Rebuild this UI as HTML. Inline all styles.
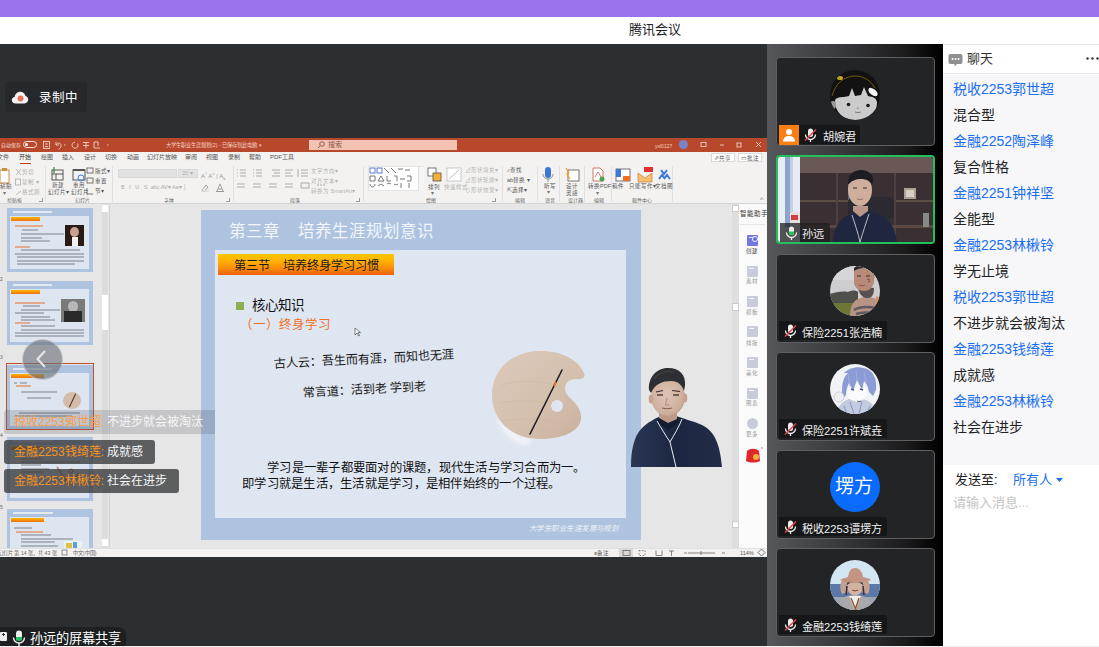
<!DOCTYPE html>
<html lang="zh-CN"><head><meta charset="utf-8">
<style>
*{box-sizing:border-box;margin:0;padding:0}
html,body{width:1099px;height:647px;overflow:hidden;background:#fff;font-family:"Liberation Sans",sans-serif}
.a{position:absolute}
#top{left:0;top:0;width:1099px;height:17px;background:#9a72ec}
#title{left:0;top:17px;width:1099px;height:27px;background:#fff}
#title span{position:absolute;left:629px;top:2px;font-size:13px;color:#222;letter-spacing:0}
#main{left:0;top:44px;width:767px;height:602px;background:#2c2f32}
#strip{left:767px;top:44px;width:176px;height:602px;background:linear-gradient(90deg,#55575b 0%,#3a3b3e 40%,#1a1a1b 80%,#050505 95%,#000 100%)}
#chat{left:943px;top:44px;width:156px;height:602px;background:#fff;border-top:1px solid #e4e4e6}
#bottomline{left:0;top:646px;width:1099px;height:1px;background:#f0f0f0}
.t13{font-size:13px;line-height:16px;white-space:nowrap}
.msgs div{font-size:14px;line-height:26px;color:#222;white-space:nowrap}
.msgs .b{color:#1a6ff0}
.tiny{font-size:7px;line-height:8px;white-space:nowrap}
.tabs span{position:absolute;top:0;font-size:6px;line-height:9px;color:#555;white-space:nowrap}
.tile{width:159px;height:89px;background:#232426;border-radius:4px;overflow:hidden}
.lab{height:19px;background:#161718;border-radius:0 3px 0 0}
.lt{font-size:11.2px;line-height:14px;color:#f0f0f0;white-space:nowrap}
.bub{height:24px;border-radius:3px;padding-left:10px;font-size:12px;line-height:24px;white-space:nowrap}
</style></head><body>
<div class="a" id="top"></div>
<div class="a" id="title"><span>腾讯会议</span></div>
<div class="a" id="main">
<div class="a" style="left:5px;top:38px;width:82px;height:30px;background:#26282b;border-radius:4px"></div>
<svg class="a" style="left:11px;top:47px" width="18" height="13" viewBox="0 0 18 13"><path d="M4.5 12.5C2.3 12.5 .8 11 .8 9.2c0-1.7 1.3-3 2.9-3.2C4.1 3 6.4.8 9.3.8c2.6 0 4.7 1.8 5.2 4.3 1.6.3 2.7 1.7 2.7 3.5 0 2.1-1.6 3.9-3.7 3.9z" fill="#f4f4f4"/><circle cx="9.5" cy="7.5" r="3" fill="#e5735c"/></svg>
<div class="a t13" style="left:39px;top:46px;color:#fff;font-size:12.5px">录制中</div>
<div class="a" style="left:0;top:583px;width:126px;height:19px;background:#1d1f21;border-radius:0 8px 0 0"></div>
<div class="a" style="left:0;top:588px;width:7px;height:9px;background:#eee;border-radius:1px"></div><div class="a" style="left:2px;top:590px;width:3px;height:1px;background:#333"></div><div class="a" style="left:3px;top:589px;width:1px;height:3px;background:#333"></div>
<svg class="a" style="left:12px;top:586px" width="14" height="16" viewBox="0 0 14 16"><rect x="4" y="0.5" width="6" height="10" rx="3" fill="#eee"/><rect x="4" y="7" width="6" height="3.5" fill="#22c55e"/><path d="M1.5 7.5a5.5 5.5 0 0 0 11 0" stroke="#eee" stroke-width="1.4" fill="none"/><path d="M7 13v3" stroke="#eee" stroke-width="1.4"/></svg>
<div class="a t13" style="left:30px;top:587px;color:#fff;font-size:13.2px">孙远的屏幕共享</div>
</div>
<div class="a" id="ppt" style="left:0;top:138px;width:767px;height:419px;background:#e6e6e6;overflow:hidden">
<!-- title bar -->
<div class="a" style="left:0;top:0;width:767px;height:14px;background:#b8482b"></div>
<div class="a tiny" style="left:1px;top:4px;color:#fbe3dc;font-size:4.8px">自动保存</div>
<div class="a" style="left:23px;top:3px;width:14px;height:7px;border:1px solid #fbe3dc;border-radius:4px"></div>
<div class="a" style="left:25px;top:5px;width:3px;height:3px;background:#fff;border-radius:2px"></div>
<svg class="a" style="left:42px;top:2px" width="70" height="10"><g stroke="#f3cfc4" fill="none" stroke-width="0.9"><rect x="1.5" y="1.5" width="6" height="7"/><path d="M3 4h3M3 6.5h3"/><path d="M14 2v3h3"/><path d="M14 5c1.5-2.5 5-2.5 5 0.5 0 2-1 3-2.5 4"/><path d="M22 5h1.5"/><path d="M33 2.2a3 3 0 1 0 2.5 1.3"/><path d="M41 2.5h6M44 2.5v6M41 5.5h6"/><path d="M52 2h4v4M52 2v6h6"/><path d="M65 5h1.5"/></g></svg>
<div class="a tiny" style="left:166px;top:3px;color:#f4cfc3;font-size:5.3px">大学生职业生涯规划(2) - 已保存到此电脑 ▾</div>
<div class="a" style="left:309px;top:2px;width:148px;height:10px;background:#f2c3b3"></div>
<svg class="a" style="left:317px;top:3px" width="8" height="8"><circle cx="5" cy="3" r="2.3" stroke="#7a4a3a" fill="none" stroke-width="0.8"/><path d="M3.3 4.7L1 7" stroke="#7a4a3a" stroke-width="0.8"/></svg>
<div class="a tiny" style="left:328px;top:3px;color:#8a5a4a">搜索</div>
<div class="a tiny" style="left:655px;top:4px;color:#f4cfc3;font-size:5px">yxl0127</div>
<div class="a" style="left:679px;top:2px;width:9px;height:9px;background:#7a83c7;border-radius:50%"></div>
<svg class="a" style="left:696px;top:2px" width="70" height="10"><g stroke="#f4d0c5" fill="none" stroke-width="0.9"><rect x="5" y="2.5" width="5" height="4"/><path d="M24 5h4"/><rect x="41" y="3" width="4" height="4"/><path d="M60 2l5 5M65 2l-5 5"/></g></svg>
<!-- tabs -->
<div class="a" style="left:0;top:14px;width:767px;height:51px;background:#f3f2f1"></div>
<div class="a tabs" style="left:0;top:15px">
<span style="left:-3px">文件</span><span style="left:19px;color:#333">开始</span><span style="left:41px">绘图</span><span style="left:62px">插入</span><span style="left:84px">设计</span><span style="left:105px">切换</span><span style="left:127px">动画</span><span style="left:147px">幻灯片放映</span><span style="left:185px">审阅</span><span style="left:206px">视图</span><span style="left:228px">录制</span><span style="left:249px">帮助</span><span style="left:270px">PDF工具</span>
</div>
<div class="a" style="left:20px;top:25px;width:11px;height:1px;background:#c43e1c"></div>
<div class="a" style="left:711px;top:15px;width:24px;height:9px;border:1px solid #d8d8d8;background:#fff"></div>
<div class="a tiny" style="left:714px;top:16px;color:#555;font-size:5.5px">⇗共享</div>
<div class="a" style="left:738px;top:15px;width:24px;height:9px;border:1px solid #d8d8d8;background:#fff"></div>
<div class="a tiny" style="left:741px;top:16px;color:#555;font-size:5.5px">▭批注</div>
<!-- ribbon -->
<div id="ribbon">
<div class="a" style="left:7px;top:59px;font-size:5px;line-height:7px;color:#666;white-space:nowrap">剪贴板</div>
<div class="a" style="left:75px;top:59px;font-size:5px;line-height:7px;color:#666;white-space:nowrap">幻灯片</div>
<div class="a" style="left:164px;top:59px;font-size:5px;line-height:7px;color:#666;white-space:nowrap">字体</div>
<div class="a" style="left:290px;top:59px;font-size:5px;line-height:7px;color:#666;white-space:nowrap">段落</div>
<div class="a" style="left:426px;top:59px;font-size:5px;line-height:7px;color:#666;white-space:nowrap">绘图</div>
<div class="a" style="left:515px;top:59px;font-size:5px;line-height:7px;color:#666;white-space:nowrap">编辑</div>
<div class="a" style="left:545px;top:59px;font-size:5px;line-height:7px;color:#666;white-space:nowrap">语音</div>
<div class="a" style="left:568px;top:59px;font-size:5px;line-height:7px;color:#666;white-space:nowrap">设计器</div>
<div class="a" style="left:594px;top:59px;font-size:5px;line-height:7px;color:#666;white-space:nowrap">编辑</div>
<div class="a" style="left:632px;top:59px;font-size:5px;line-height:7px;color:#666;white-space:nowrap">稿件中心</div>
<div class="a" style="left:45px;top:28px;width:1px;height:36px;background:#e0e0e0"></div>
<div class="a" style="left:112px;top:28px;width:1px;height:36px;background:#e0e0e0"></div>
<div class="a" style="left:233px;top:28px;width:1px;height:36px;background:#e0e0e0"></div>
<div class="a" style="left:363px;top:28px;width:1px;height:36px;background:#e0e0e0"></div>
<div class="a" style="left:502px;top:28px;width:1px;height:36px;background:#e0e0e0"></div>
<div class="a" style="left:537px;top:28px;width:1px;height:36px;background:#e0e0e0"></div>
<div class="a" style="left:559px;top:28px;width:1px;height:36px;background:#e0e0e0"></div>
<div class="a" style="left:584px;top:28px;width:1px;height:36px;background:#e0e0e0"></div>
<div class="a" style="left:611px;top:28px;width:1px;height:36px;background:#e0e0e0"></div>
<div class="a" style="left:672px;top:28px;width:1px;height:36px;background:#e0e0e0"></div>
<div class="a" style="left:39px;top:60px;width:4px;height:4px;border-right:1px solid #999;border-bottom:1px solid #999"></div>
<div class="a" style="left:226px;top:60px;width:4px;height:4px;border-right:1px solid #999;border-bottom:1px solid #999"></div>
<div class="a" style="left:356px;top:60px;width:4px;height:4px;border-right:1px solid #999;border-bottom:1px solid #999"></div>
<div class="a" style="left:492px;top:60px;width:4px;height:4px;border-right:1px solid #999;border-bottom:1px solid #999"></div>
<svg class="a" style="left:0;top:29px" width="12" height="20"><rect x="0" y="3" width="9" height="13" fill="#fff" stroke="#c89040" stroke-width="1"/><rect x="2" y="1" width="5" height="3" fill="#c89040"/></svg>
<div class="a" style="left:0px;top:45px;font-size:5.5px;line-height:7px;color:#555;white-space:nowrap">粘贴</div>
<div class="a" style="left:3px;top:52px;font-size:5.5px;line-height:7px;color:#777;white-space:nowrap">▾</div>
<svg class="a" style="left:14px;top:30px" width="10" height="30"><g stroke="#aaa" fill="none" stroke-width="0.8"><path d="M2 1l5 6M7 1L2 7"/><rect x="1.5" y="11" width="5" height="6"/><path d="M2 27l5-4"/></g></svg>
<div class="a" style="left:22px;top:31px;font-size:5.5px;line-height:7px;color:#b0b0b0;white-space:nowrap">剪切</div>
<div class="a" style="left:22px;top:41px;font-size:5.5px;line-height:7px;color:#b0b0b0;white-space:nowrap">复制 ▾</div>
<div class="a" style="left:22px;top:51px;font-size:5.5px;line-height:7px;color:#b0b0b0;white-space:nowrap">格式刷</div>
<svg class="a" style="left:50px;top:28px" width="40" height="16"><g stroke="#555" fill="none" stroke-width="1"><rect x="2" y="4" width="11" height="10"/><path d="M2 8h11M6 8v6"/><rect x="23" y="4" width="12" height="10"/><path d="M23 4h12" stroke-width="2"/></g><path d="M4 1v6" stroke="#2a8a3a" stroke-width="1.2"/><circle cx="31" cy="12" r="3" stroke="#3a7ad8" fill="none" stroke-width="1"/></svg>
<div class="a" style="left:52px;top:44px;font-size:5.5px;line-height:7px;color:#555;white-space:nowrap">新建</div>
<div class="a" style="left:48px;top:51px;font-size:5.5px;line-height:7px;color:#555;white-space:nowrap">幻灯片▾</div>
<div class="a" style="left:73px;top:44px;font-size:5.5px;line-height:7px;color:#555;white-space:nowrap">重用</div>
<div class="a" style="left:71px;top:51px;font-size:5.5px;line-height:7px;color:#555;white-space:nowrap">幻灯片</div>
<svg class="a" style="left:86px;top:29px" width="8" height="30"><g stroke="#555" fill="none" stroke-width="0.8"><rect x="1" y="1" width="6" height="5"/><rect x="1" y="11" width="6" height="5"/><path d="M1 21v6h6"/></g></svg>
<div class="a" style="left:95px;top:30px;font-size:5.5px;line-height:7px;color:#555;white-space:nowrap">版式▾</div>
<div class="a" style="left:95px;top:40px;font-size:5.5px;line-height:7px;color:#555;white-space:nowrap">重置</div>
<div class="a" style="left:95px;top:50px;font-size:5.5px;line-height:7px;color:#555;white-space:nowrap">节▾</div>
<div class="a" style="left:118px;top:31px;width:59px;height:9px;background:#e2e2e2;border:1px solid #d8d8d8"></div>
<div class="a" style="left:178px;top:31px;width:20px;height:9px;background:#e2e2e2;border:1px solid #d8d8d8"></div>
<div class="a" style="left:182px;top:32px;font-size:5.5px;line-height:7px;color:#b0b0b0;white-space:nowrap">20 ▾</div>
<div class="a" style="left:201px;top:32px;font-size:6px;line-height:7px;color:#999;white-space:nowrap">A<sup style="font-size:4px">^</sup> A<sup style="font-size:4px">˅</sup> | A<sub style="font-size:4px">b</sub></div>
<div class="a" style="left:121px;top:46px;font-size:5.5px;line-height:7px;color:#aaa;white-space:nowrap">B &nbsp; I &nbsp; U &nbsp; S &nbsp;abc AV▾ Aa▾ │</div>
<svg class="a" style="left:200px;top:45px" width="30" height="9"><g stroke="#999" fill="none" stroke-width="0.9"><path d="M2 7l4-5 2 2-4 5z"/><path d="M1 8h8" stroke="#ddd" stroke-width="1.5"/><path d="M17 8l3-7 3 7M18 6h4"/><path d="M16 8.5h8" stroke="#999" stroke-width="1"/></g></svg>
<svg class="a" style="left:236px;top:30px" width="124" height="22"><g stroke="#999" fill="none" stroke-width="0.8"><path d="M1 2h1M4 2h6M1 5h1M4 5h6M1 8h1M4 8h6"/><path d="M17 2h1M20 2h6M17 5h1M20 5h6M17 8h1M20 8h6"/><path d="M36 2h8M38 5h6M36 8h8"/><path d="M49 2h8M49 5h6M49 8h8"/><path d="M62 1v8M65 2h7M65 5h7M65 8h7"/><path d="M1 16h8M1 19h8M17 16h8M17 19h8M33 16h8M33 19h8M49 16h8M49 19h8M65 15h8v5h-8z"/><path d="M81 17h2M84 17h2M87 17h2"/></g></svg>
<div class="a" style="left:311px;top:30px;font-size:5.5px;line-height:7px;color:#b4b4b4;white-space:nowrap">文字方向▾</div>
<div class="a" style="left:311px;top:40px;font-size:5.5px;line-height:7px;color:#b4b4b4;white-space:nowrap">对齐文本▾</div>
<div class="a" style="left:311px;top:50px;font-size:5.5px;line-height:7px;color:#b4b4b4;white-space:nowrap">转换为 SmartArt▾</div>
<div class="a" style="left:368px;top:28px;width:56px;height:25px;background:#fff;border:1px solid #e4e4e4"></div>
<svg class="a" style="left:369px;top:29px" width="54" height="22"><g stroke="#555" fill="none" stroke-width="0.8"><rect x="1" y="1" width="5" height="5" stroke="#3060c0"/><rect x="8" y="1" width="5" height="5" stroke="#3060c0"/><path d="M15 1l5 5M22 1l5 5M29 2h5M36 3h5"/><path d="M1 9h5v5h-5zM9 14l3-5 3 5zM18 9v5h4M25 9h3v5M31 12h5M38 9h4v5h-4"/><path d="M1 17c0 4 5 4 5 0M9 19l3-2 3 2M18 17q2-2 4 0M25 17q2 2 4 0M32 16v5M40 16v5"/></g></svg>
<div class="a" style="left:418px;top:29px;width:6px;height:24px;background:#f5f5f5;border-left:1px solid #ddd"></div>
<svg class="a" style="left:427px;top:29px" width="16" height="16"><rect x="1" y="1" width="8" height="8" fill="#fff" stroke="#555" stroke-width="0.8"/><rect x="6" y="6" width="8" height="8" fill="#f5b030" stroke="#555" stroke-width="0.8"/></svg>
<div class="a" style="left:428px;top:46px;font-size:5.5px;line-height:7px;color:#555;white-space:nowrap">排列</div>
<div class="a" style="left:431px;top:52px;font-size:5.5px;line-height:7px;color:#777;white-space:nowrap">▾</div>
<svg class="a" style="left:446px;top:29px" width="18" height="16"><rect x="1" y="1" width="14" height="13" fill="#fff" stroke="#bbb" stroke-width="0.8"/><path d="M3 12l10-9" stroke="#bbb"/></svg>
<div class="a" style="left:444px;top:46px;font-size:5.5px;line-height:7px;color:#b4b4b4;white-space:nowrap">快速样式</div>
<div class="a" style="left:465px;top:29px;font-size:5.5px;line-height:7px;color:#b4b4b4;white-space:nowrap">⊿形状填充▾</div>
<div class="a" style="left:465px;top:39px;font-size:5.5px;line-height:7px;color:#b4b4b4;white-space:nowrap">⊿形状轮廓▾</div>
<div class="a" style="left:465px;top:49px;font-size:5.5px;line-height:7px;color:#b4b4b4;white-space:nowrap">⊙形状效果▾</div>
<div class="a" style="left:507px;top:29px;font-size:5.5px;line-height:7px;color:#555;white-space:nowrap">⌕查找</div>
<div class="a" style="left:507px;top:39px;font-size:5.5px;line-height:7px;color:#555;white-space:nowrap">ab替换 ▾</div>
<div class="a" style="left:507px;top:49px;font-size:5.5px;line-height:7px;color:#555;white-space:nowrap">⇱选择▾</div>
<svg class="a" style="left:542px;top:28px" width="12" height="18"><rect x="3" y="1" width="6" height="11" rx="3" fill="#3a78d8"/><path d="M1 8a5 5 0 0 0 10 0M6 13v3" stroke="#777" stroke-width="0.8" fill="none"/></svg>
<div class="a" style="left:544px;top:45px;font-size:5.5px;line-height:7px;color:#555;white-space:nowrap">听写</div>
<div class="a" style="left:547px;top:51px;font-size:5.5px;line-height:7px;color:#777;white-space:nowrap">▾</div>
<svg class="a" style="left:564px;top:29px" width="16" height="15"><rect x="4" y="3" width="11" height="11" fill="#fff" stroke="#555" stroke-width="0.8"/><path d="M2 1l3 5-2 1 3 5" stroke="#f5a020" stroke-width="1.2" fill="none"/></svg>
<div class="a" style="left:566px;top:45px;font-size:5.5px;line-height:7px;color:#555;white-space:nowrap">设计</div>
<div class="a" style="left:566px;top:52px;font-size:5.5px;line-height:7px;color:#555;white-space:nowrap">灵感</div>
<svg class="a" style="left:590px;top:29px" width="16" height="15"><path d="M3 1h7l3 3v10H3z" fill="#fff" stroke="#d05040" stroke-width="0.8"/><path d="M5 10l3-5 3 5" stroke="#d05040" stroke-width="0.8" fill="none"/><circle cx="12" cy="12" r="2.5" fill="#50a050"/></svg>
<div class="a" style="left:588px;top:45px;font-size:5.5px;line-height:7px;color:#555;white-space:nowrap">转换PDF</div>
<div class="a" style="left:596px;top:52px;font-size:5.5px;line-height:7px;color:#777;white-space:nowrap">▾</div>
<svg class="a" style="left:614px;top:28px" width="60" height="18"><rect x="2" y="3" width="14" height="12" fill="#fff" stroke="#555" stroke-width="0.8"/><rect x="2" y="3" width="5" height="8" fill="#3a7ad8"/><rect x="9" y="10" width="7" height="5" fill="#f07020"/><path d="M24 7l7 5 7-5v9H24z" fill="#f5c070" stroke="#c07030" stroke-width="0.6"/><rect x="30" y="1" width="9" height="5" fill="#e03030"/><path d="M47 4l3 4 3-4M45 13l3-4 3 4M50 13l3-4 3 4" stroke="#3a7ad8" stroke-width="2" fill="none"/></svg>
<div class="a" style="left:612px;top:45px;font-size:5.5px;line-height:7px;color:#555;white-space:nowrap">稿件</div>
<div class="a" style="left:629px;top:45px;font-size:5.5px;line-height:7px;color:#555;white-space:nowrap">只能写作▾</div>
<div class="a" style="left:655px;top:45px;font-size:5.5px;line-height:7px;color:#555;white-space:nowrap">文档图</div>
<div class="a" style="left:760px;top:58px;font-size:7px;line-height:7px;color:#777;white-space:nowrap">^</div>
</div>
<div class="a" style="left:0;top:65px;width:767px;height:1px;background:#d5d5d5"></div>
<!-- thumbnails pane -->
<div class="a" style="left:0;top:66px;width:109px;height:344px;background:#e6e6e6"></div>
<div class="a" style="left:109px;top:66px;width:1px;height:344px;background:#d4d4d4"></div>
<div class="a" style="left:102px;top:66px;width:6px;height:344px;background:#dcdcdc"></div>
<div class="a" style="left:102px;top:67px;width:6px;height:7px;background:#fff"></div>
<div class="a" style="left:102px;top:157px;width:6px;height:35px;background:#fff"></div>
<div class="a" style="left:102px;top:401px;width:6px;height:7px;background:#fff"></div>
<div class="a" style="left:7px;top:70px;width:86px;height:64px;background:#adc3e0;overflow:hidden"><div class="a" style="left:6px;top:3px;width:39px;height:2px;background:#f4f7fb;opacity:.75"></div><div class="a" style="left:3px;top:8px;width:79px;height:53px;background:#dde5f0"></div><div class="a" style="left:3.5px;top:9px;width:29px;height:4px;background:linear-gradient(#ffb800,#f07010)"></div><div class="a" style="left:58px;top:17px;width:19px;height:21px;background:#2a1a14"></div><div class="a" style="left:63px;top:19px;width:9px;height:10px;border-radius:50%;background:#c8a090"></div><div class="a" style="left:65px;top:29px;width:6px;height:9px;background:#f0f0f0"></div><div class="a" style="left:8px;top:17px;width:28px;height:2px;background:#e8844a;opacity:.6"></div><div class="a" style="left:15px;top:21px;width:16px;height:2px;background:#6a6e78;opacity:.42"></div><div class="a" style="left:14px;top:25px;width:43px;height:2px;background:#6a6e78;opacity:.42"></div><div class="a" style="left:14px;top:28.5px;width:21px;height:2px;background:#6a6e78;opacity:.42"></div><div class="a" style="left:14px;top:32px;width:29px;height:2px;background:#6a6e78;opacity:.42"></div><div class="a" style="left:8px;top:38px;width:15px;height:2px;background:#e8844a;opacity:.6"></div><div class="a" style="left:14px;top:41px;width:59px;height:2px;background:#6a6e78;opacity:.42"></div><div class="a" style="left:8px;top:44.5px;width:69px;height:2px;background:#6a6e78;opacity:.42"></div><div class="a" style="left:10px;top:48px;width:67px;height:2px;background:#6a6e78;opacity:.42"></div><div class="a" style="left:10px;top:51.5px;width:67px;height:2px;background:#6a6e78;opacity:.42"></div><div class="a" style="left:10px;top:55px;width:58px;height:2px;background:#6a6e78;opacity:.42"></div></div><div class="a" style="left:7px;top:143px;width:86px;height:64px;background:#adc3e0;overflow:hidden"><div class="a" style="left:6px;top:3px;width:39px;height:2px;background:#f4f7fb;opacity:.75"></div><div class="a" style="left:3px;top:8px;width:79px;height:53px;background:#dde5f0"></div><div class="a" style="left:3.5px;top:9px;width:29px;height:4px;background:linear-gradient(#ffb800,#f07010)"></div><div class="a" style="left:54px;top:18px;width:24px;height:23px;background:#7a7a7a"></div><div class="a" style="left:61px;top:20px;width:10px;height:11px;border-radius:50%;background:#b8b8b8"></div><div class="a" style="left:57px;top:30px;width:18px;height:11px;background:#2a2a2a"></div><div class="a" style="left:8px;top:21px;width:30px;height:2px;background:#e8844a;opacity:.6"></div><div class="a" style="left:16px;top:24px;width:17px;height:2px;background:#6a6e78;opacity:.42"></div><div class="a" style="left:14px;top:28px;width:39px;height:2px;background:#6a6e78;opacity:.42"></div><div class="a" style="left:8px;top:31px;width:29px;height:2px;background:#6a6e78;opacity:.42"></div><div class="a" style="left:14px;top:35px;width:29px;height:2px;background:#6a6e78;opacity:.42"></div><div class="a" style="left:14px;top:38px;width:34px;height:2px;background:#6a6e78;opacity:.42"></div><div class="a" style="left:8px;top:41px;width:15px;height:2px;background:#e8844a;opacity:.6"></div><div class="a" style="left:14px;top:44px;width:34px;height:2px;background:#6a6e78;opacity:.42"></div><div class="a" style="left:14px;top:48px;width:63px;height:2px;background:#6a6e78;opacity:.42"></div><div class="a" style="left:8px;top:51px;width:69px;height:2px;background:#6a6e78;opacity:.42"></div><div class="a" style="left:8px;top:54px;width:69px;height:2px;background:#6a6e78;opacity:.42"></div></div><div class="a" style="left:6px;top:225px;width:88px;height:67px;border:1.5px solid #c0502e"></div><div class="a" style="left:7px;top:227px;width:86px;height:64px;background:#adc3e0;overflow:hidden"><div class="a" style="left:6px;top:3px;width:39px;height:2px;background:#f4f7fb;opacity:.75"></div><div class="a" style="left:3px;top:8px;width:79px;height:53px;background:#dde5f0"></div><div class="a" style="left:3.5px;top:9px;width:33px;height:4px;background:linear-gradient(#ffb800,#f07010)"></div><div class="a" style="left:56px;top:27px;width:18px;height:17px;border-radius:50%;background:#d6bca8"></div><div class="a" style="left:65px;top:28px;width:1px;height:15px;background:#333;transform:rotate(25deg)"></div><div class="a" style="left:7px;top:17px;width:3px;height:2px;background:#6a6e78;opacity:.42"></div><div class="a" style="left:13px;top:17px;width:7px;height:2px;background:#6a6e78;opacity:.42"></div><div class="a" style="left:9px;top:20px;width:15px;height:2px;background:#e8844a;opacity:.6"></div><div class="a" style="left:14px;top:26px;width:36px;height:2px;background:#6a6e78;opacity:.42"></div><div class="a" style="left:20px;top:32px;width:24px;height:2px;background:#6a6e78;opacity:.42"></div><div class="a" style="left:12px;top:47px;width:61px;height:2px;background:#6a6e78;opacity:.42"></div><div class="a" style="left:8px;top:50px;width:57px;height:2px;background:#6a6e78;opacity:.42"></div></div><div class="a" style="left:7px;top:299px;width:86px;height:64px;background:#adc3e0;overflow:hidden"><div class="a" style="left:6px;top:3px;width:39px;height:2px;background:#f4f7fb;opacity:.75"></div><div class="a" style="left:3px;top:8px;width:79px;height:53px;background:#dde5f0"></div><div class="a" style="left:3.5px;top:9px;width:33px;height:4px;background:linear-gradient(#ffb800,#f07010)"></div><svg class="a" style="left:48px;top:28px" width="26" height="24"><path d="M2 2l12 18 10-12M6 10l8 10" stroke="#b86a3a" stroke-width="1.5" fill="none" opacity=".8"/><circle cx="16" cy="6" r="2" stroke="#b86a3a" fill="none"/></svg><div class="a" style="left:14px;top:21px;width:22px;height:2px;background:#e8844a;opacity:.6"></div><div class="a" style="left:14px;top:24px;width:59px;height:2px;background:#6a6e78;opacity:.42"></div><div class="a" style="left:14px;top:27px;width:20px;height:2px;background:#6a6e78;opacity:.42"></div><div class="a" style="left:14px;top:30.5px;width:28px;height:2px;background:#6a6e78;opacity:.42"></div><div class="a" style="left:14px;top:34px;width:23px;height:2px;background:#6a6e78;opacity:.42"></div></div><div class="a" style="left:7px;top:371px;width:86px;height:64px;background:#adc3e0;overflow:hidden"><div class="a" style="left:6px;top:3px;width:40px;height:2px;background:#f4f7fb;opacity:.75"></div><div class="a" style="left:3px;top:8px;width:79px;height:53px;background:#dde5f0"></div><div class="a" style="left:3.5px;top:9px;width:33px;height:4px;background:linear-gradient(#ffb800,#f07010)"></div><div class="a" style="left:57px;top:32px;width:18px;height:8px;background:#e8f0f8"></div><div class="a" style="left:59px;top:34px;width:6px;height:5px;background:#e0c040"></div><div class="a" style="left:66px;top:33px;width:4px;height:6px;background:#60a0d0"></div><div class="a" style="left:7px;top:18px;width:18px;height:2px;background:#6a6e78;opacity:.42"></div><div class="a" style="left:9px;top:21.5px;width:27px;height:2px;background:#e8844a;opacity:.6"></div><div class="a" style="left:14px;top:25px;width:30px;height:2px;background:#6a6e78;opacity:.42"></div><div class="a" style="left:14px;top:28.5px;width:52px;height:2px;background:#6a6e78;opacity:.42"></div><div class="a" style="left:14px;top:32px;width:34px;height:2px;background:#6a6e78;opacity:.42"></div><div class="a" style="left:14px;top:35.5px;width:37px;height:2px;background:#6a6e78;opacity:.42"></div></div><div class="a tiny" style="left:0;top:137px;color:#666;font-size:5px">2</div><div class="a tiny" style="left:0;top:215px;color:#666;font-size:5px">3</div><div class="a tiny" style="left:0;top:293px;color:#666;font-size:5px">4</div><div class="a tiny" style="left:0;top:365px;color:#666;font-size:5px">5</div>
<!-- canvas scrollbar + task pane -->
<div class="a" style="left:732px;top:66px;width:7px;height:344px;background:#dedede"></div>
<div class="a" style="left:732px;top:67px;width:7px;height:7px;background:#fff;border:1px solid #ccc"></div>
<div class="a" style="left:732px;top:165px;width:7px;height:8px;background:#fff;border:1px solid #ccc"></div>
<div class="a" style="left:732px;top:383px;width:7px;height:7px;background:#fff;border:1px solid #ccc"></div>
<div class="a" style="left:739px;top:66px;width:28px;height:344px;background:#fafafa"></div>
<div class="a" style="left:740px;top:72px;font-size:6.5px;line-height:8px;color:#333;white-space:nowrap">智能助手▾</div>
<div class="a" style="left:740px;top:86px;width:25px;height:1px;background:#e6e6e6"></div>
<div class="a" style="left:747px;top:97px;width:11px;height:11px;background:#7378e0;border-radius:1px"></div>
<div class="a" style="left:749px;top:99px;width:5px;height:1px;background:#fff;opacity:.8"></div>
<div class="a" style="left:746px;top:110px;font-size:5.5px;line-height:6px;color:#333;white-space:nowrap">创建</div>
<div class="a" style="left:747px;top:128px;width:11px;height:11px;background:#c8ccd8;border-radius:1px"></div>
<div class="a" style="left:749px;top:130px;width:5px;height:1px;background:#fff;opacity:.8"></div>
<div class="a" style="left:746px;top:140px;font-size:5.5px;line-height:6px;color:#999;white-space:nowrap">素材</div>
<div class="a" style="left:747px;top:158px;width:11px;height:11px;background:#c8ccd8;border-radius:1px"></div>
<div class="a" style="left:749px;top:160px;width:5px;height:1px;background:#fff;opacity:.8"></div>
<div class="a" style="left:746px;top:171px;font-size:5.5px;line-height:6px;color:#999;white-space:nowrap">模板</div>
<div class="a" style="left:747px;top:188px;width:11px;height:11px;background:#c8ccd8;border-radius:1px"></div>
<div class="a" style="left:749px;top:190px;width:5px;height:1px;background:#fff;opacity:.8"></div>
<div class="a" style="left:746px;top:202px;font-size:5.5px;line-height:6px;color:#999;white-space:nowrap">排版</div>
<div class="a" style="left:747px;top:219px;width:11px;height:11px;background:#c8ccd8;border-radius:1px"></div>
<div class="a" style="left:749px;top:221px;width:5px;height:1px;background:#fff;opacity:.8"></div>
<div class="a" style="left:746px;top:232px;font-size:5.5px;line-height:6px;color:#999;white-space:nowrap">美化</div>
<div class="a" style="left:747px;top:250px;width:11px;height:11px;background:#c8ccd8;border-radius:1px"></div>
<div class="a" style="left:749px;top:252px;width:5px;height:1px;background:#fff;opacity:.8"></div>
<div class="a" style="left:746px;top:262px;font-size:5.5px;line-height:6px;color:#999;white-space:nowrap">图表</div>
<div class="a" style="left:747px;top:280px;width:11px;height:11px;border-radius:50%;background:#c8ccd8"></div>
<div class="a" style="left:746px;top:293px;font-size:5.5px;line-height:6px;color:#999;white-space:nowrap">更多</div>
<div class="a" style="left:752px;top:98px;width:6px;height:6px;border-radius:50%;background:#5a6ae0;border:1px solid #fff"></div>
<svg class="a" style="left:744px;top:308px" width="20" height="18"><path d="M3 5c3-3 9-3 12 0l1 10c-4 2-10 2-14 0z" fill="#e02828"/><circle cx="12" cy="11" r="3" fill="#f5b040"/><path d="M17 1l2 2M19 1l-2 2" stroke="#aaa" stroke-width="0.6"/></svg>
<!-- slide -->
<div class="a" style="left:201px;top:72px;width:440px;height:330px;background:#adc3e0"></div>
<div class="a" style="left:229px;top:83px;font-size:16.5px;line-height:20px;color:#f2f5fa;white-space:nowrap">第三章<span style="display:inline-block;width:18px"></span>培养生涯规划意识</div>
<div class="a" style="left:215px;top:112px;width:411px;height:268px;background:#dee6f1"></div>
<div class="a" style="left:218px;top:116px;width:176px;height:21px;background:linear-gradient(180deg,#ffc600 0%,#ffb000 35%,#f88a0a 70%,#ee5f10 100%)"></div>
<div class="a" style="left:234px;top:120px;font-size:12.2px;line-height:16px;color:#1a1a1a;white-space:nowrap">第三节<span style="display:inline-block;width:13px"></span>培养终身学习习惯</div>
<div class="a" style="left:236px;top:164px;width:8px;height:8px;background:#8db050"></div>
<div class="a" style="left:252px;top:160px;font-size:13.5px;line-height:16px;color:#111;white-space:nowrap">核心知识</div>
<div class="a" style="left:240px;top:179px;font-size:12.5px;line-height:16px;color:#f0701e;white-space:nowrap">（一）终身学习</div>
<svg class="a" style="left:354px;top:189px" width="7" height="10"><path d="M1 1v7l2-2 1.5 3 1-.5L4 5.5h2.5z" fill="#fff" stroke="#333" stroke-width="0.6"/></svg>
<div class="a" style="left:274px;top:218px;font-size:12.2px;line-height:16px;color:#1a1a1a;white-space:nowrap;transform:rotate(-3deg);transform-origin:0 50%">古人云：吾生而有涯，而知也无涯</div>
<div class="a" style="left:303px;top:247px;font-size:12.2px;line-height:16px;color:#1a1a1a;white-space:nowrap;transform:rotate(-3deg);transform-origin:0 50%">常言道：活到老 学到老</div>
<svg class="a" style="left:488px;top:207px" width="102" height="102" viewBox="0 0 102 102">
<defs><linearGradient id="pal" x1="0" y1="0" x2="1" y2="1"><stop offset="0" stop-color="#dccabb"/><stop offset="0.55" stop-color="#d5c0ae"/><stop offset="1" stop-color="#c9b09c"/></linearGradient>
<filter id="blr"><feGaussianBlur stdDeviation="2.5"/></filter></defs>
<path d="M46 14C30 18 10 40 12 66c2 18 14 30 30 31" stroke="#f4f7fb" stroke-width="6" fill="none" filter="url(#blr)"/>
<path d="M50 6C72 5 90 14 96 28C98 33 94 35 88 34C80 34 75 40 78 48C82 55 94 60 93 74C91 88 72 94 52 94C24 94 4 76 4 50C4 24 24 7 50 6Z" fill="url(#pal)"/>
<path d="M14 40c20-6 40-4 60 2M10 58c25-4 45-2 70 4M14 76c20-3 40-2 60 2" stroke="#c9ae98" stroke-width="1" fill="none" opacity=".35"/>
<circle cx="69" cy="61" r="6" fill="#dee6f1"/>
<path d="M74 25L42 89" stroke="#1e1e24" stroke-width="1.6" stroke-linecap="round"/>
<path d="M68 37l-2 4" stroke="#e0702a" stroke-width="2"/>
</svg>
<div class="a" style="left:267px;top:322px;font-size:12.3px;letter-spacing:.25px;line-height:16px;color:#111;white-space:nowrap">学习是一辈子都要面对的课题，现代生活与学习合而为一。</div>
<div class="a" style="left:242px;top:338px;font-size:12.3px;letter-spacing:.25px;line-height:16px;color:#111;white-space:nowrap">即学习就是生活，生活就是学习，是相伴始终的一个过程。</div>
<div class="a" style="left:529px;top:386px;font-size:7.5px;letter-spacing:.45px;line-height:10px;color:#eef2f8;font-style:italic;white-space:nowrap">大学生职业生涯发展与规划</div>
<svg class="a" style="left:630px;top:222px" width="94" height="108" viewBox="0 0 94 108">
<defs><linearGradient id="jk" x1="0" y1="0" x2="1" y2="0"><stop offset="0" stop-color="#2a3654"/><stop offset=".5" stop-color="#1c2640"/><stop offset="1" stop-color="#222c46"/></linearGradient>
<radialGradient id="fc" cx="45%" cy="45%" r="60%"><stop offset="0" stop-color="#dcc4b6"/><stop offset=".8" stop-color="#cfb09e"/><stop offset="1" stop-color="#bf9c88"/></radialGradient></defs>
<path d="M1 107C1 90 4 76 12 68C18 62 25 59 30 56L37 61L46 56C54 59 63 61 72 65C84 71 90 83 92 107Z" fill="url(#jk)"/>
<path d="M30 56l7 5 9-5 3 6-11 8-11-8z" fill="#141c30"/>
<path d="M29 47h18v12l-9 4-9-5z" fill="#bd9a88"/>
<ellipse cx="38" cy="37" rx="17" ry="19" fill="url(#fc)"/>
<path d="M19 30C18 18 26 8 38 8C50 8 56 15 55 26L54 31C52 25 48 21 41 21C32 21 25 24 21 33Z" fill="#2e2f34"/>
<path d="M24 19c4-6 12-9 20-7" stroke="#4a4a50" stroke-width="1.2" fill="none" opacity=".7"/>
<path d="M26 32l7-1.5M42 30.5l8 1" stroke="#3a2a28" stroke-width="1.2"/>
<path d="M27 35h6M43 35h6" stroke="#5a4038" stroke-width="1.3"/>
<path d="M37 38l-1.5 7h4" stroke="#b08878" stroke-width="0.9" fill="none"/>
<path d="M32 48q5 1.5 10 0" stroke="#8a5e52" stroke-width="1.1" fill="none"/>
<ellipse cx="21" cy="39" rx="2.3" ry="4.5" fill="#c8a290"/><ellipse cx="55" cy="38" rx="2.3" ry="4.5" fill="#c8a290"/>
<path d="M27 61C31 68 36 76 40 82M52 59C49 67 44 75 40 82L46 107" stroke="#eceef2" stroke-width="1" fill="none"/>
</svg>
<!-- status bar -->
<div class="a" style="left:0;top:410px;width:767px;height:9px;background:#f3f2f1;border-top:1px solid #e0e0e0"></div>
<div class="a tiny" style="left:-2px;top:411px;color:#666;font-size:5.2px">幻灯片 第 14 张，共 43 张</div><svg class="a" style="left:61px;top:411px" width="7" height="7"><rect x="1" y="1" width="5" height="5" fill="none" stroke="#777" stroke-width="0.8"/></svg><div class="a tiny" style="left:73px;top:411px;color:#666;font-size:5.2px">中文(中国)</div>
<div class="a tiny" style="left:594px;top:411px;color:#555;font-size:5.5px">≡备注</div>
<div class="a" style="left:619px;top:410px;width:14px;height:9px;background:#d8d8d8"></div>
<svg class="a" style="left:620px;top:411px" width="146" height="8"><g stroke="#666" fill="none" stroke-width="0.8"><rect x="3" y="1.5" width="7" height="5"/><rect x="19" y="1.5" width="6" height="5" stroke-dasharray="1.5 1.5"/><path d="M36 1.5v5h6v-5M49 2h5M51.5 2v5"/><path d="M64 4h3M68 4h27M102 4h3M81 2v4"/></g></svg>
<div class="a tiny" style="left:740px;top:411px;color:#555;font-size:5.5px">114%</div>
<svg class="a" style="left:757px;top:410px" width="9" height="9"><path d="M4.5 1L8 4.5 4.5 8 1 4.5z" stroke="#555" fill="none" stroke-width="0.8"/></svg>
</div>
<div class="a" id="strip"></div>
<div id="overlay">
<div class="a" style="left:22px;top:339px;width:41px;height:41px;border-radius:50%;background:rgba(105,110,120,.62);border:1px solid rgba(225,225,230,.6)"></div>
<svg class="a" style="left:34px;top:349px" width="14" height="20"><path d="M11 2L3.5 10 11 18" stroke="#e8e8ea" stroke-width="2" fill="none"/></svg>
<div class="a bub" style="left:4px;top:410px;width:211px;background:rgba(70,72,80,.2);line-height:25px;border-radius:3px 0 0 3px"><span style="color:#f7a04a">税收2253郭世超:</span> <span style="color:#f6f6f6">不进步就会被淘汰</span></div>
<div class="a bub" style="left:4px;top:440px;width:151px;background:rgba(62,63,66,.82)"><span style="color:#f7931e">金融2253钱绮莲:</span> <span style="color:#f6f6f6">成就感</span></div>
<div class="a bub" style="left:4px;top:469px;width:175px;background:rgba(62,63,66,.82)"><span style="color:#f7931e">金融2253林楸铃:</span> <span style="color:#f6f6f6">社会在进步</span></div>
</div>
<div class="a" id="tiles">
<div class="a tile" style="left:776px;top:57px;border:1px solid #5d5f63">
<svg class="a" style="left:53px;top:12px" width="50" height="50" viewBox="0 0 50 50"><defs><clipPath id="c0"><circle cx="25" cy="25" r="25"/></clipPath></defs><g clip-path="url(#c0)">
<rect width="50" height="50" fill="#121212"/>
<path d="M5 31C5 28 9 27 14 27L19 26L22 18L25 26L31 25L34 17L38 26C43 27 47 28 47 33C47 44 38 50 26 50S5 43 5 31Z" fill="#cbcbcb"/>
<circle cx="18.5" cy="34.5" r="1.8" fill="#1a1a1a"/><circle cx="38" cy="35.5" r="1.8" fill="#1a1a1a"/>
<path d="M25 42q3 1.2 6 0" stroke="#666" stroke-width="0.8" fill="none"/><path d="M28 37l-1 1.5h2" stroke="#888" stroke-width="0.6" fill="none"/>
<path d="M2 26C5 14 14 6 25 6c9 0 16 5 20 12" stroke="#9a8000" stroke-width="0.7" fill="none"/>
<ellipse cx="10" cy="8" rx="3" ry="2" fill="#e0a020"/><circle cx="9" cy="8.5" r="1.1" fill="#60b030"/>
<ellipse cx="43" cy="22" rx="5.5" ry="3" transform="rotate(40 43 22)" fill="#f4f4f4"/>
<ellipse cx="3" cy="35" rx="3" ry="4" fill="#9a9a9a"/>
</g></svg>
<div class="a lab" style="left:2px;top:67px;width:81px"></div><div class="a" style="left:2px;top:67px;width:20px;height:20px;background:#fa7e12"></div><svg class="a" style="left:5px;top:70px" width="14" height="14" viewBox="0 0 14 14"><circle cx="7" cy="4" r="3" fill="#fff"/><path d="M1 13.5c0-3.5 2.7-5.5 6-5.5s6 2 6 5.5z" fill="#fff"/></svg><div class="a" style="left:22px;top:67px"><svg class="a" style="left:5px;top:3px" width="13" height="14" viewBox="0 0 13 14"><rect x="4" y="0.5" width="5" height="8.5" rx="2.5" fill="#eee"/><path d="M1.5 6.5a5 5 0 0 0 10 0" stroke="#eee" stroke-width="1.3" fill="none"/><path d="M6.5 11.5v2.5" stroke="#eee" stroke-width="1.3"/><path d="M1 12.5L12 1.5" stroke="#e5484d" stroke-width="1.4"/></svg></div><div class="a lt" style="left:46px;top:72px">胡婉君</div></div>
<div class="a tile" style="left:776px;top:155px;border:2px solid #22c05a">
<svg class="a" style="left:0;top:0" width="155" height="85" viewBox="0 0 155 85">
<rect width="155" height="85" fill="#3b3033"/>
<rect x="0" y="0" width="155" height="16" fill="#6a5856"/>
<rect x="0" y="0" width="22" height="85" fill="#e6ecf4"/><rect x="7" y="0" width="5" height="70" fill="#8ea4cc"/><rect x="12" y="0" width="3" height="70" fill="#c4d0e4"/>
<rect x="22" y="16" width="133" height="69" fill="#3a2f32"/>
<rect x="22" y="43" width="133" height="2" fill="#5e4e48"/><rect x="58" y="16" width="2" height="69" fill="#4e4040"/><rect x="116" y="16" width="2" height="69" fill="#4e4040"/>
<rect x="22" y="68" width="133" height="3" fill="#5c4842"/>
<rect x="126" y="31" width="12" height="11" fill="#b0a090"/><rect x="128" y="33" width="8" height="7" fill="#d8d0c8"/>
<rect x="70" y="24" width="5" height="19" fill="#5a6a90"/><rect x="75" y="28" width="4" height="15" fill="#c8a878"/>
<rect x="12" y="55" width="10" height="15" fill="#e4e0e0"/><rect x="13" y="58" width="7" height="5" fill="#d04040"/>
<rect x="100" y="57" width="4" height="13" fill="#ccc"/><rect x="145" y="56" width="6" height="14" fill="#888"/>
<rect x="70" y="40" width="46" height="22" rx="5" fill="#2a2a30"/>
<path d="M55 85c1-14 6-24 18-28l7-3h12l8 3c12 4 17 14 19 28z" fill="#1f2740"/>
<path d="M75 54l7 6 8-6v-5H75z" fill="#b9978a"/>
<ellipse cx="82" cy="33" rx="12" ry="16" fill="#cfae9e"/>
<path d="M70 27c0-9 5-14 13-14 8 0 13 5 12 12l-1 3c-2-4-6-6-11-6s-10 2-12 5z" fill="#1c1c22"/>
<path d="M75 31h4M85 31h4" stroke="#3a2a28" stroke-width="1"/>
<path d="M79 42q3 1 6 0" stroke="#8a5e52" stroke-width="0.8" fill="none"/>
<path d="M74 58c3 9 6 18 8 27M91 57c-3 9-6 18-9 28" stroke="#e4e4e8" stroke-width="0.8" fill="none"/>
</svg>
<div class="a lab" style="left:2px;top:66px;width:50px;background:rgba(30,30,32,.75)"></div><svg class="a" style="left:7px;top:69px" width="13" height="14" viewBox="0 0 13 14"><rect x="4" y="0.5" width="5" height="8.5" rx="2.5" fill="#eee"/><rect x="4" y="5.5" width="5" height="3.5" fill="#2fc25b"/><path d="M1.5 6.5a5 5 0 0 0 10 0" stroke="#eee" stroke-width="1.3" fill="none"/><path d="M6.5 11.5v2.5" stroke="#eee" stroke-width="1.3"/></svg><div class="a lt" style="left:24px;top:70px">孙远</div></div>
<div class="a tile" style="left:776px;top:254px;border:1px solid #5d5f63">
<svg class="a" style="left:53px;top:11px" width="50" height="50" viewBox="0 0 50 50"><defs><clipPath id="c2"><circle cx="25" cy="25" r="25"/></clipPath></defs><g clip-path="url(#c2)">
<rect width="50" height="50" fill="#cdcdcf"/><rect x="0" y="0" width="50" height="14" fill="#d6d6d8"/>
<path d="M0 28c6-2 12-3 18-2 4-2 8-2 10 0v12H0z" fill="#4e504c"/>
<path d="M0 37h28v13H0z" fill="#6e7636"/>
<path d="M20 50c0-8 2-14 8-17l8-3 8 2c5 2 6 4 7 6v12z" fill="#b89486"/>
<path d="M46 30l4 2v10l-4-2z" fill="#d89068"/>
<path d="M24 44c5-3 12-4 22-2M26 48c5-2 10-2 16-1" stroke="#4a4a56" stroke-width="2.5" fill="none" opacity=".8"/>
<path d="M28 20c0 5 3 12 9 12s7-5 7-10z" fill="#5a5052"/>
<path d="M24 6c0-5 4-8 10-8s11 3 11 9l-1 10c-2 5-5 8-10 8s-9-3-10-8z" fill="#b88a7a"/>
<path d="M24 2c3-3 7-4 11-4 7 0 11 3 12 9l-2 1c-2-4-5-6-10-6s-8 1-11 3z" fill="#2a2a2e"/>
<path d="M27 10h4M36 10h4" stroke="#3a3030" stroke-width="1.2"/>
<path d="M29 19q3 1.5 6 0" stroke="#9a5a52" stroke-width="1.3" fill="none"/>
<path d="M37 13l3 1M38 16l2-1" stroke="#4a4050" stroke-width="0.8"/>
</g></svg>
<div class="a lab" style="left:2px;top:66px;width:108px"></div><div class="a" style="left:2px;top:66px"><svg class="a" style="left:5px;top:3px" width="13" height="14" viewBox="0 0 13 14"><rect x="4" y="0.5" width="5" height="8.5" rx="2.5" fill="#eee"/><path d="M1.5 6.5a5 5 0 0 0 10 0" stroke="#eee" stroke-width="1.3" fill="none"/><path d="M6.5 11.5v2.5" stroke="#eee" stroke-width="1.3"/><path d="M1 12.5L12 1.5" stroke="#e5484d" stroke-width="1.4"/></svg></div><div class="a lt" style="left:25px;top:71px">保险2251张浩楠</div></div>
<div class="a tile" style="left:776px;top:352px;border:1px solid #5d5f63">
<svg class="a" style="left:53px;top:11px" width="50" height="50" viewBox="0 0 50 50"><defs><clipPath id="c3"><circle cx="25" cy="25" r="25"/></clipPath></defs><g clip-path="url(#c3)">
<rect width="50" height="50" fill="#f2f3f6"/>
<path d="M6 50c2-9 8-14 14-15l6 3 6-3c7 1 13 6 15 15z" fill="#c3cbe0"/>
<path d="M20 38l4 12M32 37l-3 13M14 42l3 8M40 42l-3 8" stroke="#93a0c4" stroke-width="1.2"/>
<ellipse cx="27" cy="29" rx="10" ry="8.5" fill="#fafafc"/>
<path d="M14 9C19 3 31 1 39 6c6 4 8 12 7 20l-3 6-4-4c-1-6-3-9-5-11l-2 9-5-10-4 11-4-8c-2 4-3 8-3 12l-3 3c-2-9-1-20 5-25z" fill="#8a9bd6"/>
<path d="M18 10l2 12M26 6l1 10M34 8l2 10" stroke="#a8b6e4" stroke-width="1" opacity=".7"/>
<path d="M21 25l3 1M30 25l3 1" stroke="#4a5898" stroke-width="1.4"/>
<path d="M27 37q2 1 4 0" stroke="#444" stroke-width="0.7" fill="none"/>
<circle cx="9" cy="33" r="5" fill="#f0f0f3" stroke="#c8c8cc" stroke-width="0.8"/>
</g></svg>
<div class="a lab" style="left:2px;top:66px;width:108px"></div><div class="a" style="left:2px;top:66px"><svg class="a" style="left:5px;top:3px" width="13" height="14" viewBox="0 0 13 14"><rect x="4" y="0.5" width="5" height="8.5" rx="2.5" fill="#eee"/><path d="M1.5 6.5a5 5 0 0 0 10 0" stroke="#eee" stroke-width="1.3" fill="none"/><path d="M6.5 11.5v2.5" stroke="#eee" stroke-width="1.3"/><path d="M1 12.5L12 1.5" stroke="#e5484d" stroke-width="1.4"/></svg></div><div class="a lt" style="left:25px;top:71px">保险2251许斌垚</div></div>
<div class="a tile" style="left:776px;top:450px;border:1px solid #5d5f63">
<div class="a" style="left:53px;top:11px;width:50px;height:50px;border-radius:50%;background:#0a6cff"></div><div class="a" style="left:58px;top:24px;font-size:19px;line-height:24px;color:#fff;white-space:nowrap">塄方</div>
<div class="a lab" style="left:2px;top:66px;width:108px"></div><div class="a" style="left:2px;top:66px"><svg class="a" style="left:5px;top:3px" width="13" height="14" viewBox="0 0 13 14"><rect x="4" y="0.5" width="5" height="8.5" rx="2.5" fill="#eee"/><path d="M1.5 6.5a5 5 0 0 0 10 0" stroke="#eee" stroke-width="1.3" fill="none"/><path d="M6.5 11.5v2.5" stroke="#eee" stroke-width="1.3"/><path d="M1 12.5L12 1.5" stroke="#e5484d" stroke-width="1.4"/></svg></div><div class="a lt" style="left:25px;top:71px">税收2253谭塄方</div></div>
<div class="a tile" style="left:776px;top:548px;border:1px solid #5d5f63">
<svg class="a" style="left:53px;top:11px" width="50" height="50" viewBox="0 0 50 50"><defs><clipPath id="c5"><circle cx="25" cy="25" r="25"/></clipPath></defs><g clip-path="url(#c5)">
<rect width="50" height="50" fill="#d2e6f2"/><rect y="24" width="50" height="13" fill="#5a78aa"/><rect y="37" width="50" height="13" fill="#9aa6b4"/>
<path d="M6 50c1-10 8-15 19-15s18 5 19 15z" fill="#a9a9ab"/>
<path d="M19 36l6 14 6-14z" fill="#eeeeee"/><path d="M21 38l5 12M29 38l-4 12" stroke="#9a5a30" stroke-width="1.4"/>
<path d="M12 34c-3-6-2-12 2-16l4 2c-2 4-2 8 0 12zM38 34c3-6 2-12-2-16l-4 2c2 4 2 8 0 12z" fill="#c4a090"/>
<ellipse cx="25" cy="27" rx="8" ry="8.5" fill="#d4b2a2"/>
<path d="M17 25c0-5 3-8 8-8s8 3 8 8c-2-2-5-3-8-3s-6 1-8 3z" fill="#3a3030"/>
<path d="M17 26l-1 9M33 26l1 9" stroke="#3a3030" stroke-width="1.5"/>
<path d="M10 20c3-2 6-2 8-3 1-6 3-9 7-9s7 3 8 9c3 1 6 1 8 3-5 2-11 3-16 3s-11-1-15-3z" fill="#c39483"/>
<path d="M22 30q3 2 6 0" stroke="#8a4a3a" stroke-width="1" fill="#c87a60"/>
</g></svg>
<div class="a lab" style="left:2px;top:66px;width:108px"></div><div class="a" style="left:2px;top:66px"><svg class="a" style="left:5px;top:3px" width="13" height="14" viewBox="0 0 13 14"><rect x="4" y="0.5" width="5" height="8.5" rx="2.5" fill="#eee"/><path d="M1.5 6.5a5 5 0 0 0 10 0" stroke="#eee" stroke-width="1.3" fill="none"/><path d="M6.5 11.5v2.5" stroke="#eee" stroke-width="1.3"/><path d="M1 12.5L12 1.5" stroke="#e5484d" stroke-width="1.4"/></svg></div><div class="a lt" style="left:25px;top:71px">金融2253钱绮莲</div></div>
</div>
<div class="a" id="chat">
<div class="a" style="left:0;top:0;width:156px;height:29px;border-bottom:1px solid #e6e6e8;background:#fff"></div>
<svg class="a" style="left:5px;top:8px" width="15" height="15" viewBox="0 0 15 15"><path d="M2.5 1h10a2 2 0 0 1 2 2v6a2 2 0 0 1-2 2H9l-2.5 2.5V11h-4a2 2 0 0 1-2-2V3a2 2 0 0 1 2-2z" fill="#8f8f91"/><circle cx="4.5" cy="6" r="1" fill="#fff"/><circle cx="7.5" cy="6" r="1" fill="#fff"/><circle cx="10.5" cy="6" r="1" fill="#fff"/></svg>
<div class="a t13" style="left:24px;top:6px;color:#333">聊天</div>
<svg class="a" style="left:142px;top:11px" width="14" height="5"><circle cx="2.5" cy="2.5" r="1.2" fill="#333"/><circle cx="7.5" cy="2.5" r="1.2" fill="#333"/><circle cx="12.5" cy="2.5" r="1.2" fill="#333"/></svg>
<div class="a" style="left:0;top:30px;width:156px;height:390px;background:#f7f7fa"></div>
<div class="a msgs" style="left:10px;top:31px">
<div class="b">税收2253郭世超</div><div>混合型</div>
<div class="b">金融2252陶泽峰</div><div>复合性格</div>
<div class="b">金融2251钟祥坚</div><div>全能型</div>
<div class="b">金融2253林楸铃</div><div>学无止境</div>
<div class="b">税收2253郭世超</div><div>不进步就会被淘汰</div>
<div class="b">金融2253钱绮莲</div><div>成就感</div>
<div class="b">金融2253林楸铃</div><div>社会在进步</div>
</div>
<div class="a t13" style="left:12px;top:427px;color:#222">发送至:</div>
<div class="a t13" style="left:70px;top:427px;color:#1a6ff0;font-size:13px">所有人</div>
<svg class="a" style="left:113px;top:433px" width="7" height="5"><path d="M0 0h7L3.5 4z" fill="#1a6ff0"/></svg>
<div class="a t13" style="left:10px;top:450px;color:#c4c4c4">请输入消息...</div>
</div>
<div class="a" id="bottomline"></div>
</body></html>
